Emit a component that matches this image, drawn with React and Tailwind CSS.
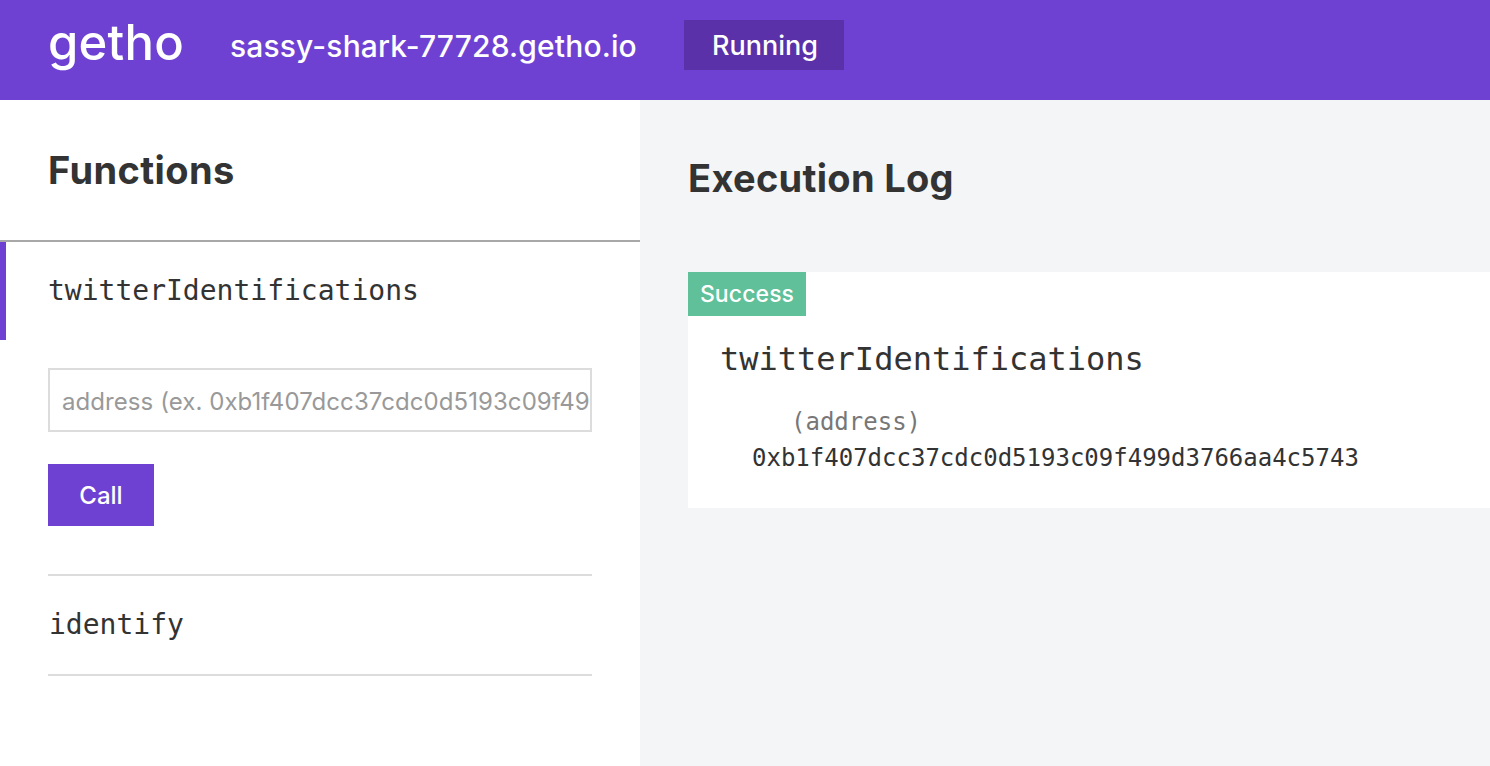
import React from 'react'

const sans = "font-['Inter',sans-serif]"
const mono = "font-['DejaVu_Sans_Mono',monospace]"

const Header = () => (
  <header className="h-[100px] bg-[#6f41d3] flex items-center pl-12 text-white">
    <div className="text-[49px] leading-none w-[182px] -mt-[16px] tracking-[0.2px] font-[450]">getho</div>
    <div className="text-[30px] font-medium -mt-[8px] w-[454px] tracking-[0.15px]">sassy-shark-77728.getho.io</div>
    <div className="w-40 h-[50px] -mt-[10px] pt-[3px] pl-0.5 bg-[#5a31a8] flex items-center justify-center text-[27px] font-medium">Running</div>
  </header>
)

const Functions = () => (
  <aside className="w-[640px] bg-white">
    <div className="h-[142px] border-b-2 border-[#a8a8a8] pl-12 pt-[46px]">
      <h2 className="text-[38px] leading-[48px] font-bold text-[#333] tracking-[0.4px]">Functions</h2>
    </div>
    <div className={`h-[98px] border-l-[6px] border-[#6f41d3] pl-[42px] pt-[30px] ${mono} text-[28px] leading-[38px] text-[#333]`}>
      twitterIdentifications
    </div>
    <div className="px-12">
      <div className="mt-7 h-16 border-2 border-[#dcdcdc] flex items-center pl-3 pt-1 overflow-hidden">
        <span className="text-[24px] text-[#999] whitespace-nowrap tracking-[0.07px]">address (ex. 0xb1f407dcc37cdc0d5193c09f49</span>
      </div>
      <button className="mt-8 w-[106px] h-[62px] pt-0.5 bg-[#6f41d3] text-white text-[24px] font-medium block">Call</button>
      <div className="mt-12 border-t-2 border-[#dcdcdc] border-b-2 h-[102px] flex items-center">
        <span className={`${mono} text-[28px] text-[#333] pl-px`}>identify</span>
      </div>
    </div>
  </aside>
)

const Log = () => (
  <main className="flex-1 bg-[#f4f5f7] pl-12">
    <h2 className="text-[38px] leading-[50px] font-bold text-[#333] pt-[53px] h-[172px] box-border tracking-[0.3px]">Execution Log</h2>
    <section className="bg-white h-[236px]">
      <div className="w-[118px] h-11 bg-[#5fc09a] text-white text-[23px] font-medium flex items-center justify-center tracking-[0.1px]">Success</div>
      <div className={`${mono} pl-8 pt-[20px] text-[32px] leading-[46px] text-[#333]`}>twitterIdentifications</div>
      <div className={`${mono} pl-[103px] mt-[22px] text-[24px] leading-[36px] text-[#777]`}>(address)</div>
      <div className={`${mono} pl-16 text-[24px] leading-[36px] text-[#333]`}>0xb1f407dcc37cdc0d5193c09f499d3766aa4c5743</div>
    </section>
  </main>
)

export default function App() {
  return (
    <div className={`${sans} h-[766px] overflow-hidden flex flex-col`}>
      <Header />
      <div className="flex flex-1">
        <Functions />
        <Log />
      </div>
    </div>
  )
}
